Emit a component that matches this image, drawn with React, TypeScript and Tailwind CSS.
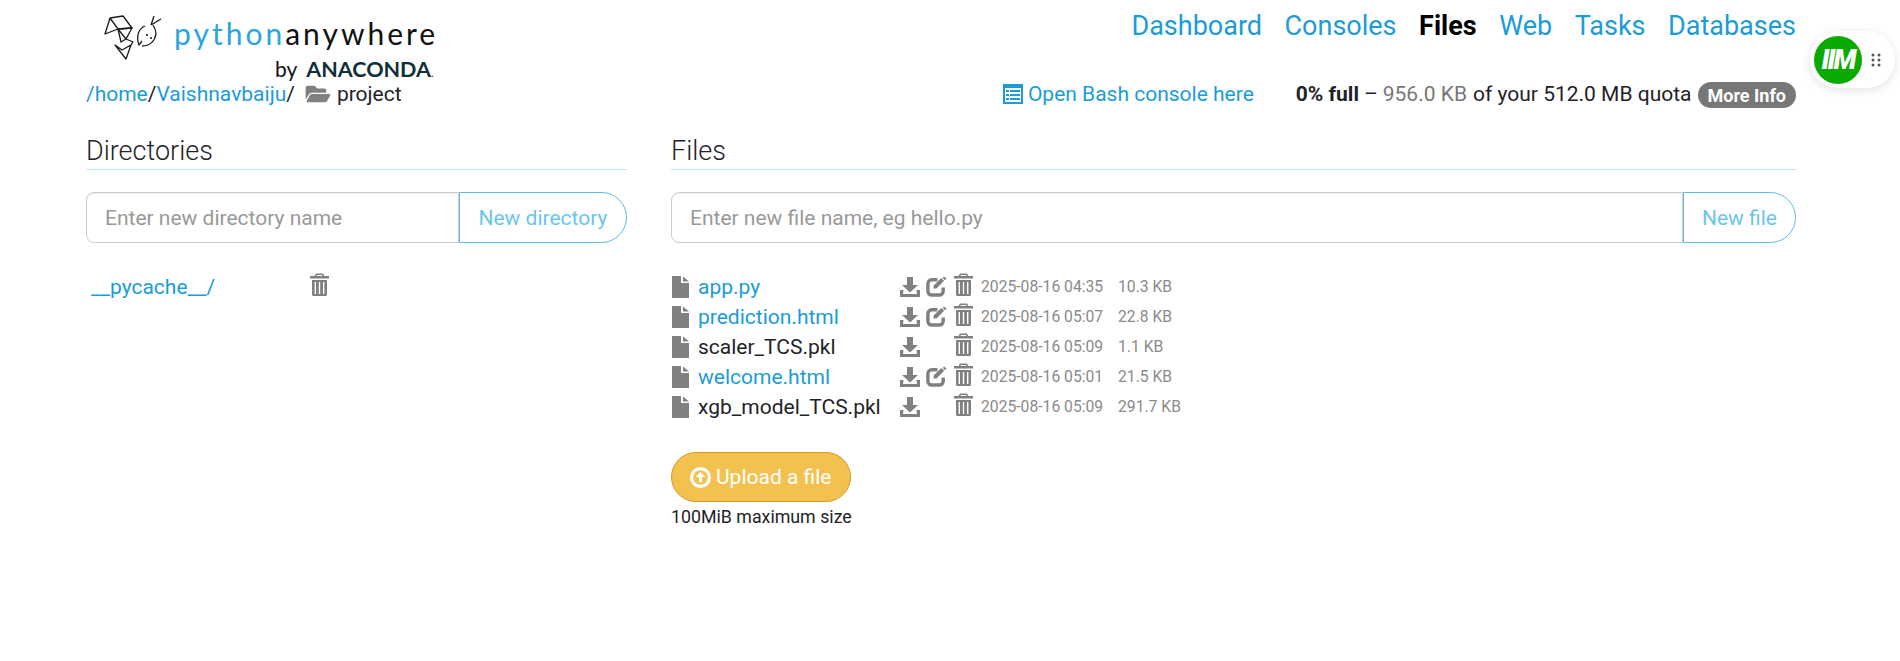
import React from "react";
import { FaFolderOpen } from "react-icons/fa";

const FileIcon = () => (
  <svg viewBox="0 0 17 22" className="w-[17px] h-[22px] shrink-0" fill="#808080">
    <path d="M0 0h9v7h8v15H0z" />
    <path d="M11 0.5l6 5h-6z" />
  </svg>
);
const DownloadIcon = () => (
  <svg viewBox="0 0 20 22" className="w-[20px] h-[22px]" fill="#808080">
    <path d="M7 1h6v8h5l-8 7.5L2 9h5z" />
    <path d="M0 14h3.500l-.5 4h14l-.5-4H20v7H0z" />
  </svg>
);
const EditIcon = () => (
  <svg viewBox="0 0 22 22" className="w-[21px] h-[21px]" fill="none" stroke="#808080">
    <path d="M12 4H6a4 4 0 0 0-4 4v8a4 4 0 0 0 4 4h8a4 4 0 0 0 4-4v-4" strokeWidth="3.600" />
    <path d="M8 10l8-8 3 3-8 8H8z" fill="#808080" stroke="none" />
    <path d="M19 0.500l2.500 2.500-1.500 1.500-2.500-2.500z" fill="#808080" stroke="none" />
  </svg>
);
const TrashIcon = () => (
  <svg viewBox="0 0 19 23" className="w-[19px] h-[23px]" fill="#808080">
    <path d="M6 0.500h7l1.500 2.500H19v2.500H0V3h4.500zM7 2l-.6 1h6.200l-.6-1z" fillRule="evenodd" />
    <path d="M2 7h15v14.500a1.500 1.500 0 0 1-1.500 1.500h-12A1.500 1.500 0 0 1 2 21.500zM4.600 9v12h1.400V9zM8.800 9v12h1.400V9zM13 9v12h1.400V9z" fillRule="evenodd" />
  </svg>
);

const LogoMark = () => (
  <svg viewBox="0 0 60 46" className="w-[60px] h-[46px]" fill="none" stroke="#1a1a1a" strokeWidth="1.300" strokeLinejoin="round">
    <path d="M1 20L6 4l13-2 9 12-14 1zM6 4l8 11M1 20l13-5" />
    <path d="M14 15l14-1-6 11zM14 15l3 13 5-3" />
    <path d="M11 31l11 14 5-14-9 5zM11 31l7 5" />
    <path d="M22 25l7 3-2 3" />
    <path d="M41 12c-7 3-9 11-6 19l3-4M38 32c8 0 13-5 14-12 0-3-1-6-3-9" />
    <path d="M47 11l3-9M47 11l10-6" />
    <circle cx="43" cy="21" r="1.100" fill="#1a1a1a" stroke="none" />
    <circle cx="47" cy="24" r="1.100" fill="#1a1a1a" stroke="none" />
  </svg>
);

const files = [
  { name: "app.py", link: true, edit: true, date: "2025-08-16 04:35", size: "10.3 KB" },
  { name: "prediction.html", link: true, edit: true, date: "2025-08-16 05:07", size: "22.8 KB" },
  { name: "scaler_TCS.pkl", link: false, edit: false, date: "2025-08-16 05:09", size: "1.1 KB" },
  { name: "welcome.html", link: true, edit: true, date: "2025-08-16 05:01", size: "21.5 KB" },
  { name: "xgb_model_TCS.pkl", link: false, edit: false, date: "2025-08-16 05:09", size: "291.7 KB" },
];

function InputGroup({ placeholder, button, btnWidth }: { placeholder: string; button: string; btnWidth: string }) {
  return (
    <div className="flex h-[51px] text-[21px]">
      <div className="flex-1 flex items-center pl-[18px] border border-[#ccc] rounded-l-[8px] text-[#999] font-normal shadow-[inset_0_1px_1px_rgba(0,0,0,0.075)]">
        {placeholder}
      </div>
      <div className={`${btnWidth} flex items-center justify-center border border-[#5ebbe3] rounded-r-[26px] text-[#6cc5ea]`}>{button}</div>
    </div>
  );
}

export default function App() {
  return (
    <div className="relative w-[1900px] h-[661px] bg-white overflow-hidden text-[#1f2328] font-['Roboto',sans-serif] text-[21px] leading-[30px]">
      <div className="ml-[86px] w-[1710px]">
        <header className="flex justify-between h-[80px]">
          <div className="pl-[18px] pt-[14px] w-[360px]">
            <div className="flex items-start">
              <LogoMark />
              <div className="ml-[10px] mt-[1px] font-['Lato',sans-serif] font-normal text-[30px] leading-[36px] tracking-[3px] whitespace-nowrap">
                <span className="text-[#2ba5dc]">python</span>
                <span className="text-[#111]">anywhere</span>
              </div>
            </div>
          </div>
          <nav className="flex gap-[22.500px] text-[27px] leading-[30px] pt-[11px] text-[#1a9cd8]">
            <span>Dashboard</span>
            <span>Consoles</span>
            <span className="font-bold text-black">Files</span>
            <span>Web</span>
            <span>Tasks</span>
            <span>Databases</span>
          </nav>
        </header>

        <div className="flex justify-between items-center h-[30px] -mt-[1px]">
          <div className="flex items-center">
            <span className="text-[#1a9cd8]">/home</span>/<span className="text-[#1a9cd8]">Vaishnavbaiju</span>/
            <FaFolderOpen className="ml-[10px] mr-[6px] w-[26px] h-[22px] text-[#808080]" />
            <span>project</span>
          </div>
          <div className="flex items-center">
            <svg viewBox="0 0 20 20" className="w-[20px] h-[20px] mr-[5px]">
              <rect x="0" y="0" width="20" height="20" fill="#1a9cd8" />
              <rect x="2" y="4" width="16" height="14" fill="#fff" />
              <path d="M3 6h3v2H3zM7 6h10v2H7zM3 10h3v2H3zM7 10h10v2H7zM3 14h3v2H3zM7 14h10v2H7z" fill="#1a9cd8" />
            </svg>
            <span className="text-[#1a9cd8]">Open Bash console here</span>
            <span className="ml-[42px] font-bold">0% full</span>
            <span className="ml-[5px]">–</span>
            <span className="ml-[5px] text-[#777]">956.0 KB</span>
            <span className="ml-[6px]">of your 512.0 MB quota</span>
            <span className="ml-[6px] mt-[2px] h-[26px] px-[10px] rounded-[13px] bg-[#777] text-white font-bold text-[18px] leading-[27px]">More Info</span>
          </div>
        </div>

        <div className="flex mt-[24px]">
          <section className="w-[541px] shrink-0">
            <h2 className="text-[27px] font-light leading-[36px] border-b border-[#b8ebf8]">Directories</h2>
            <div className="mt-[22px]">
              <InputGroup placeholder="Enter new directory name" button="New directory" btnWidth="w-[168px]" />
            </div>
            <div className="flex items-start mt-[29px]">
              <span className="ml-[5px] w-[219px] text-[#1a9cd8] leading-[30px]">__pycache__/</span>
              <div className="mt-[1px]"><TrashIcon /></div>
            </div>
          </section>

          <section className="ml-[44px] flex-1">
            <h2 className="text-[27px] font-light leading-[36px] border-b border-[#b8ebf8]">Files</h2>
            <div className="mt-[22px]">
              <InputGroup placeholder="Enter new file name, eg hello.py" button="New file" btnWidth="w-[113px]" />
            </div>
            <div className="mt-[29px]">
              {files.map((f) => (
                <div key={f.name} className="flex items-center h-[30px]">
                  <div className="ml-[1px] w-[26px] -mt-[1px]"><FileIcon /></div>
                  <span className={`w-[202px] whitespace-nowrap ${f.link ? "text-[#1a9cd8]" : ""}`}>{f.name}</span>
                  <div className="w-[26px] -mt-[1px]"><DownloadIcon /></div>
                  <div className="w-[28px] -mt-[1px]">{f.edit && <EditIcon />}</div>
                  <div className="w-[27px] -mt-[5px]"><TrashIcon /></div>
                  <span className="w-[137px] text-[15.700px] text-[#8a8a8a] whitespace-nowrap">{f.date}</span>
                  <span className="text-[15.700px] text-[#8a8a8a] whitespace-nowrap">{f.size}</span>
                </div>
              ))}
            </div>
            <div className="mt-[30px] inline-flex items-center h-[50px] pl-[18px] pr-[19px] rounded-[25px] bg-[#f3c14f] border border-[#d59b21] text-white">
              <svg viewBox="0 0 20 20" className="w-[21px] h-[21px] mr-[5px]">
                <circle cx="10" cy="10" r="8.500" fill="none" stroke="#fff" strokeWidth="3" />
                <path d="M10 4.500l4.500 5h-3v5h-3v-5h-3z" fill="#fff" />
              </svg>
              Upload a file
            </div>
            <div className="text-[17.800px] leading-[24px] mt-[3px]">100MiB maximum size</div>
          </section>
        </div>
      </div>

      <div className="absolute left-[275px] top-[56px] flex items-baseline gap-[9px] text-[#111]">
        <span className="text-[21px] leading-[26px] font-['Lato',sans-serif]">by</span>
        <span className="text-[21.500px] leading-[26px] font-bold text-[#0f3038] font-['Lato',sans-serif]">ANACONDA<span className="text-[10px]">.</span></span>
      </div>

      <div className="absolute left-[1810px] top-[31px] flex items-center w-[85px] h-[57px] pl-[4px] bg-white rounded-[28px] shadow-[0_2px_10px_rgba(0,0,0,0.12)]">
        <div className="w-[48px] h-[48px] rounded-full bg-[#0aaa00] flex items-center justify-center text-white font-black italic font-['Roboto',sans-serif] text-[27px] tracking-[-2px]">IIM</div>
        <svg viewBox="0 0 10 14" className="ml-[9px] w-[10px] h-[14px]" fill="#555">
          <circle cx="2" cy="2" r="1.500" /><circle cx="8" cy="2" r="1.500" />
          <circle cx="2" cy="7" r="1.500" /><circle cx="8" cy="7" r="1.500" />
          <circle cx="2" cy="12" r="1.500" /><circle cx="8" cy="12" r="1.500" />
        </svg>
      </div>
    </div>
  );
}
